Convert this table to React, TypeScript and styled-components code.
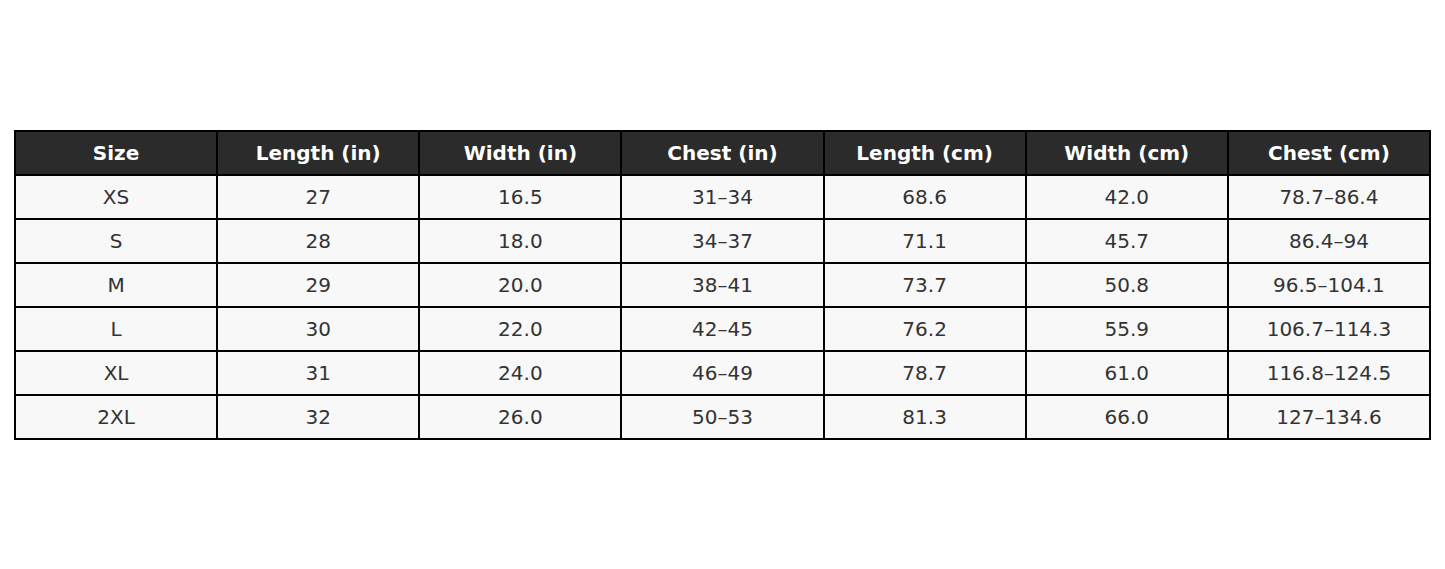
import React from "react";
import styled, {createGlobalStyle} from "styled-components";

const GlobalStyle = createGlobalStyle`
  html, body {
    margin: 0;
    padding: 0;
    background: #fff;
  }
  body {
    font-family: "DejaVu Sans", "Liberation Sans", sans-serif;
  }
`;

const Page = styled.div`
  display: flex;
  align-items: center;
  justify-content: center;
  height: 569px;
  padding: 0 14px 0 14px;
  box-sizing: border-box;
`;

const Table = styled.table`
  width: 100%;
  border-collapse: collapse;
  table-layout: fixed;
  border: 2px solid #000;
`;

const HeadCell = styled.th`
  background: #2b2b2b;
  color: #fff;
  font-weight: bold;
  font-size: 20px;
  height: 42px;
  padding: 0;
  border: 2px solid #000;
  text-align: center;
  vertical-align: middle;
`;

const Cell = styled.td`
  background: #f8f8f8;
  color: #333;
  font-size: 20px;
  height: 42px;
  padding: 0;
  border: 2px solid #000;
  text-align: center;
  vertical-align: middle;
`;

const headers = ["Size", "Length (in)", "Width (in)", "Chest (in)", "Length (cm)", "Width (cm)", "Chest (cm)"];

const rows = [
  ["XS", "27", "16.5", "31–34", "68.6", "42.0", "78.7–86.4"],
  ["S", "28", "18.0", "34–37", "71.1", "45.7", "86.4–94"],
  ["M", "29", "20.0", "38–41", "73.7", "50.8", "96.5–104.1"],
  ["L", "30", "22.0", "42–45", "76.2", "55.9", "106.7–114.3"],
  ["XL", "31", "24.0", "46–49", "78.7", "61.0", "116.8–124.5"],
  ["2XL", "32", "26.0", "50–53", "81.3", "66.0", "127–134.6"],
];

export default function App() {
  return (
    <>
      <GlobalStyle/>
      <Page>
        <Table>
          <thead>
            <tr>
              {headers.map(h => <HeadCell key={h}>{h}</HeadCell>)}
            </tr>
          </thead>
          <tbody>
            {rows.map(r => (
              <tr key={r[0]}>
                {r.map((v, i) => <Cell key={i}>{v}</Cell>)}
              </tr>
            ))}
          </tbody>
        </Table>
      </Page>
    </>
  );
}
